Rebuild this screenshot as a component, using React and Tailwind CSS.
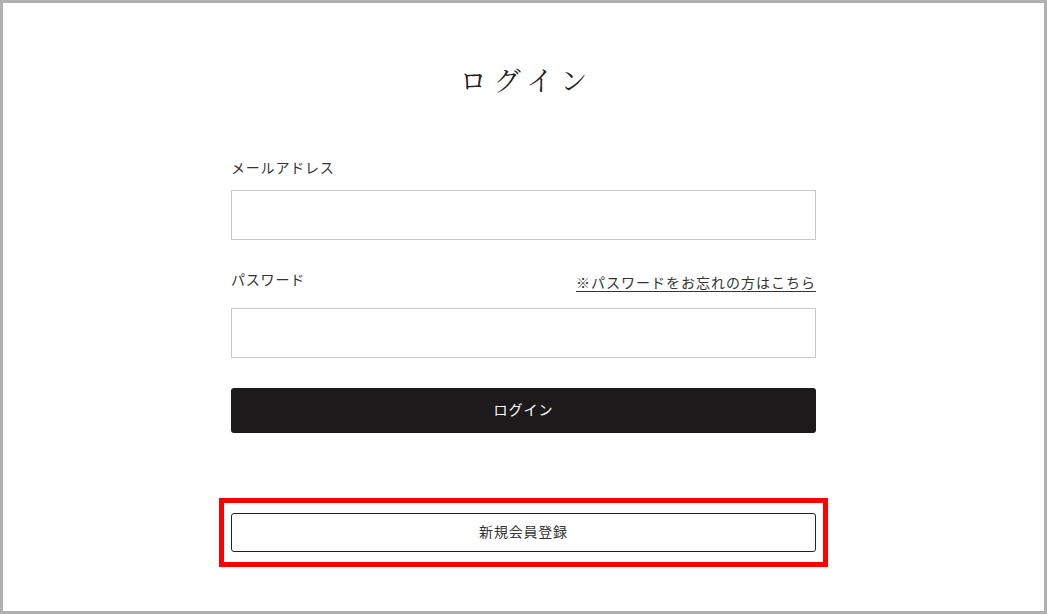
export default function App() {
  const sans = { fontFamily: '"Noto Sans CJK JP", "Noto Sans", sans-serif' };

  return (
    <div className="min-h-[614px] w-full border-[3px] border-[#b0b0b0] bg-white" style={sans}>
      <div className="mx-auto w-[585px] pt-[57px] text-[#333]">
        <h1
          className="h-10 pl-[7px] text-center text-[27px] leading-10 tracking-[7px] text-[#222]"
          style={{ fontFamily: '"Noto Serif CJK JP", "Liberation Serif", serif' }}
        >
          ログイン
        </h1>

        <div className="mt-[57px] text-sm leading-5 tracking-[0.8px]">メールアドレス</div>
        <input type="email" className="mt-[13px] block h-[50px] w-full border border-[#c8c8c8] bg-white px-3 outline-none" />

        <div className="mt-[29px] flex items-start justify-between text-sm leading-5">
          <span className="tracking-[0.8px]">パスワード</span>
          <a href="#" className="mt-[3px] tracking-[1px] text-[#333] underline underline-offset-[3px]">
            ※パスワードをお忘れの方はこちら
          </a>
        </div>
        <input type="password" className="mt-4 block h-[50px] w-full border border-[#c8c8c8] bg-white px-3 outline-none" />

        <button className="mt-[30px] flex h-[45px] w-full items-center justify-center rounded-[3px] bg-[#1c1a1b] pb-[3px] text-sm tracking-[1px] text-white">
          ログイン
        </button>
      </div>

      <div className="mx-auto mt-[65px] w-[609px] border-[5px] border-[#ff0000] px-[7px] py-[10px]">
        <button className="flex h-[39px] w-full items-center justify-center rounded-[3px] border border-[#222] bg-white pb-1 text-sm tracking-[0.8px] text-[#333]">
          新規会員登録
        </button>
      </div>
    </div>
  );
}
